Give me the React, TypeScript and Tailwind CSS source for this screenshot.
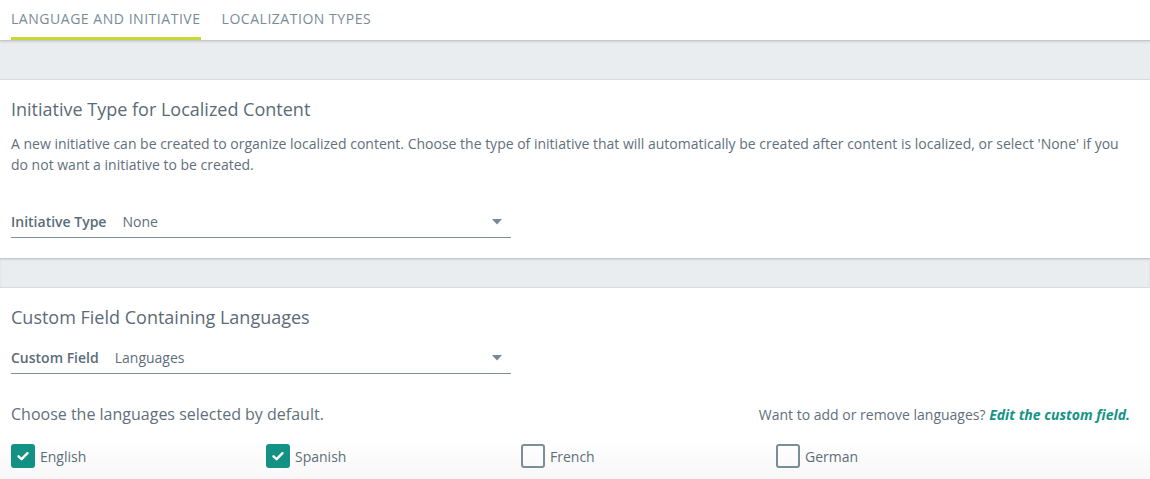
import React from "react";

const Check = ({ checked, label }: { checked: boolean; label: string }) => (
  <div className="flex items-center gap-[5px]">
    {checked ? (
      <div className="w-6 h-6 rounded-[3px] bg-[#139486] flex items-center justify-center">
        <svg width="14" height="14" viewBox="0 0 14 14">
          <path d="M2.5 7.3 L5.6 10.2 L11.5 4.2" fill="none" stroke="white" strokeWidth="2.4" strokeLinecap="round" strokeLinejoin="round" />
        </svg>
      </div>
    ) : (
      <div className="w-6 h-6 rounded-[3px] border-2 border-[#7d8f99] bg-white" />
    )}
    <span className="text-[14px] text-[#5d6f7a]">{label}</span>
  </div>
);

const Select = ({ label, value }: { label: string; value: string }) => (
  <div className="w-[500px] flex items-center h-[26px] pb-[6px] border-b border-[#7d8f99] text-[14px]">
    <span className="font-semibold text-[#5a6c78]">{label}</span>
    <span className="ml-4 text-[#5d6f7a] flex-1">{value}</span>
    <svg width="10" height="6" viewBox="0 0 10 6" className="mr-[9px]">
      <path d="M0 0 H10 L5 5.5 Z" fill="#74899a" />
    </svg>
  </div>
);

export default function App() {
  return (
    <div className="relative w-[1150px] h-[479px] overflow-hidden bg-white" style={{ fontFamily: '"Open Sans", sans-serif' }}>
      <div className="h-[41px] flex items-end px-[11px] gap-[21px] border-b border-[#c4c9cc] shadow-[0_1px_2px_rgba(0,0,0,0.12)] relative z-10 bg-white">
        <div className="h-[40px] flex items-center border-b-[3px] border-[#c9d832]">
          <span className="text-[14px] text-[#778c98] tracking-[0.038em]">LANGUAGE AND INITIATIVE</span>
        </div>
        <div className="h-[40px] flex items-center pb-[3px]">
          <span className="text-[14px] text-[#778c98] tracking-[0.038em]">LOCALIZATION TYPES</span>
        </div>
      </div>
      <div className="h-[39px] bg-[#e9edf0] border-b border-[#d7dcdf]" />
      <div className="px-[11px] pt-[17px] pb-[20px]">
        <h2 className="text-[18px] leading-[24px] text-[#5a6b77]">Initiative Type for Localized Content</h2>
        <p className="mt-[12px] text-[14px] leading-[21px] text-[#5f707c] pr-[20px]">
          A new initiative can be created to organize localized content. Choose the type of initiative that will automatically be created after content is localized, or select 'None' if you do not want a initiative to be created.
        </p>
        <div className="mt-[37px]">
          <Select label="Initiative Type" value="None" />
        </div>
      </div>
      <div className="h-[30px] bg-[#e9edf0] border-t border-[#c4c9cc] border-b border-b-[#d7dcdf] shadow-[inset_0_1px_2px_rgba(0,0,0,0.1)]" />
      <div className="px-[11px] pt-[17px]">
        <h2 className="text-[18px] leading-[24px] text-[#5a6b77]">Custom Field Containing Languages</h2>
        <div className="mt-[19px]">
          <Select label="Custom Field" value="Languages" />
        </div>
        <div className="mt-[28px] flex items-center justify-between pr-[9px]">
          <span className="text-[16px] leading-[24px] text-[#5f707c]">Choose the languages selected by default.</span>
          <span className="text-[14px] text-[#5f707c]">
            Want to add or remove languages?{" "}
            <a className="font-bold italic text-[#139486]">Edit the custom field.</a>
          </span>
        </div>
        <div className="mt-[18px] grid grid-cols-[255px_255px_255px_255px]">
          <Check checked label="English" />
          <Check checked label="Spanish" />
          <Check checked={false} label="French" />
          <Check checked={false} label="German" />
        </div>
      </div>
      <div className="absolute left-0 right-0 bottom-0 h-[40px] pointer-events-none bg-gradient-to-b from-transparent to-[rgba(0,0,0,0.03)]" />
    </div>
  );
}
